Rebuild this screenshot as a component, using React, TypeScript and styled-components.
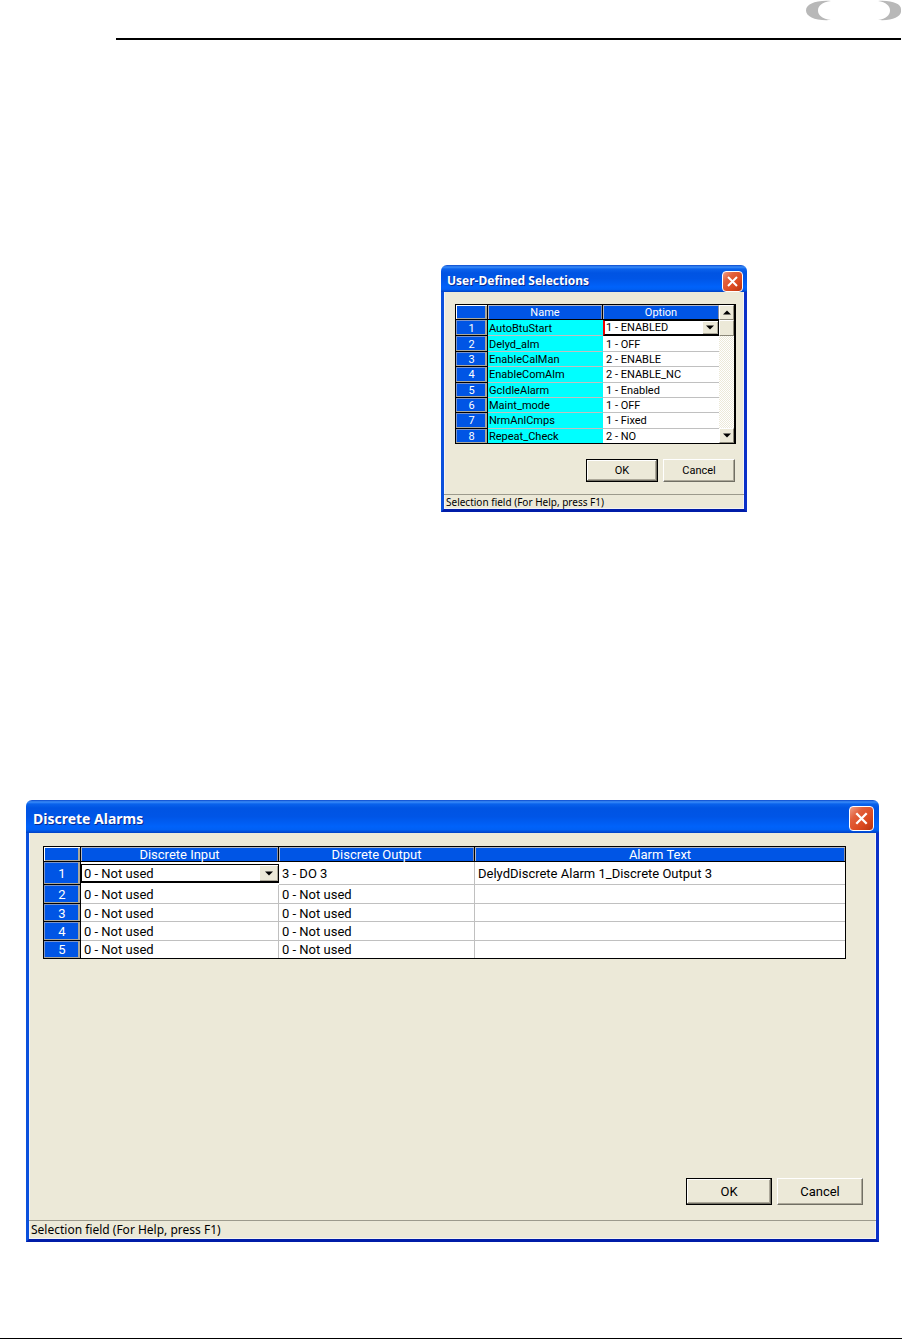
import React, { useId } from 'react';
import styled, { createGlobalStyle, css } from 'styled-components';

const GlobalStyle = createGlobalStyle`
  *, *::before, *::after { box-sizing: border-box; }
  body { margin: 0; background: #fff; color: #000; font-family: Roboto, "Liberation Sans", sans-serif; }
`;

const face = '#ece9d8';
const gridBlue = '#0055e5';
const cyan = '#00ffff';

interface Sized {
  $large?: boolean;
}

const Page = styled.div`
  display: flex;
  flex-direction: column;
`;

const PageHeader = styled.header`
  display: flex;
  justify-content: flex-end;
  height: 40px;
  margin: 0 1px 0 116px;
  border-bottom: 2px solid #000;
`;

const PageFooter = styled.footer`
  margin-top: 96px;
  border-top: 1px solid #000;
`;

const Main = styled.main`
  display: flex;
  flex-direction: column;
  gap: 288px;
  padding: 225px 23px 0 26px;
`;

const Window = styled.section<Sized>`
  display: flex;
  flex-direction: column;
  border-radius: 6px 6px 0 0;
  ${({ $large }) =>
    $large
      ? css`
          min-height: 442px;
        `
      : css`
          width: 306px;
          min-height: 247px;
          margin-left: auto;
          margin-right: 132px;
        `}
`;

const TitleBar = styled.div<Sized>`
  display: flex;
  align-items: center;
  justify-content: space-between;
  height: ${({ $large }) => ($large ? 33 : 27)}px;
  padding: ${({ $large }) => ($large ? '4px 5px 0 7px' : '5px 4px 0 6px')};
  border-radius: 6px 6px 0 0;
  background: linear-gradient(
    #0a48cc 0,
    #3a8cf8 2px,
    #0a62ec 4px,
    #0054e3 8px,
    #0055e6 50%,
    #0062fa 80%,
    #0060f4 90%,
    #0040c4 100%
  );
`;

const Title = styled.h2<Sized>`
  margin: 0;
  color: #fff;
  font: bold ${({ $large }) => ($large ? 14 : 12)}px/20px "Noto Sans", sans-serif;
  text-shadow: 1px 1px 0 #0a2a90;
  white-space: nowrap;
`;

const CloseButton = styled.button<Sized>`
  display: flex;
  align-items: center;
  justify-content: center;
  width: ${({ $large }) => ($large ? 25 : 21)}px;
  height: ${({ $large }) => ($large ? 25 : 21)}px;
  padding: 0;
  border: 1px solid #fff;
  border-radius: 4px;
  background: linear-gradient(135deg, #f0a088 0, #e2603c 30%, #dc4a20 65%, #b83410 100%);
`;

const Body = styled.div`
  flex: 1;
  display: flex;
  flex-direction: column;
  background: ${face};
  border: 3px solid #0a50dc;
  border-top: 0;
  border-right-color: #0a30c8;
  border-bottom-color: #001ca8;
  box-shadow: inset 1px 0 0 #f4f4f4, inset -1px -1px 0 #f4f4f4;
`;

const Content = styled.div<Sized>`
  flex: 1;
  display: flex;
  flex-direction: column;
  padding: ${({ $large }) => ($large ? '13px 13px 15px 14px' : '12px 8px 12px 11px')};
`;

const GridFrame = styled.div<Sized>`
  display: flex;
  border: 1px solid #000;
  background: #fff;
  margin-right: ${({ $large }) => ($large ? 17 : 0)}px;
`;

const Grid = styled.table<Sized>`
  flex: 1;
  min-width: 0;
  table-layout: fixed;
  border-collapse: separate;
  border-spacing: 0;
  height: ${({ $large }) => ($large ? 111 : 138)}px;
  font-size: ${({ $large }) => ($large ? 13 : 11)}px;
  line-height: ${({ $large }) => ($large ? 17 : 14)}px;
`;

const Col = styled.col<{ $width?: number }>`
  width: ${({ $width }) => ($width ? `${$width}px` : 'auto')};
`;

const HeadCell = styled.th`
  padding: 2px 0 0;
  line-height: 12px;
  background: ${gridBlue};
  color: #fff;
  font-weight: normal;
  text-align: center;
  border-right: 1px solid #000;
  border-bottom: 1px solid #000;
  box-shadow: inset 1px 1px 0 #b4b8c4, inset -1px 0 0 #8c90a0;
  &:last-child { border-right: 0; }
`;

const CornerCell = styled(HeadCell).attrs({ as: 'td' })`
  box-shadow: inset 1px 1px 0 #fff, inset -2px -1px 0 #aca899;
`;

const NumberCell = styled(HeadCell)`
  box-shadow: inset -2px -1px 0 #aca899, inset 1px 1px 0 #7c94c8;
  tr:last-child > & { border-bottom: 0; }
`;

const Cell = styled.td<{ $fill?: string; $active?: boolean }>`
  padding: 1px 0 0 ${({ $fill }) => ($fill ? 1 : 3)}px;
  line-height: 13px;
  background: ${({ $fill }) => $fill ?? '#fff'};
  border-right: 1px solid ${({ $fill }) => $fill ?? '#c0c0c0'};
  border-bottom: 1px solid #c0c0c0;
  white-space: nowrap;
  ${({ $active }) => $active && css`padding: 0; border: 0;`}
  &:last-child { border-right: 0; }
  tr:last-child > & { border-bottom: 0; }
`;

const Picker = styled.div<Sized & { $marked?: boolean }>`
  display: flex;
  position: relative;
  height: ${({ $large }) => ($large ? 19 : 16)}px;
  border: 1px solid #000;
  border-bottom-width: 2px;
  border-left: ${({ $marked }) => ($marked ? '2px solid #f00000' : '1px solid #000')};
`;

const PickerSelect = styled.select<Sized>`
  appearance: none;
  flex: 1;
  min-width: 0;
  padding: 1px 0 0 ${({ $large }) => ($large ? 2 : 1)}px;
  border: 0;
  border-radius: 0;
  outline: 0;
  background: #fff;
  color: #000;
  font: inherit;
  line-height: ${({ $large }) => ($large ? 15 : 12)}px;
`;

const PickerArrow = styled.span<Sized>`
  position: absolute;
  top: 0;
  right: 0;
  bottom: 0;
  width: ${({ $large }) => ($large ? 19 : 16)}px;
  display: flex;
  align-items: center;
  justify-content: center;
  background: ${face};
  box-shadow: inset 1px 1px 0 #fff, inset -1px -1px 0 #aca899;
  pointer-events: none;
`;

const ScrollBar = styled.div`
  display: flex;
  flex-direction: column;
  width: 16px;
  border-right: 1px solid #000;
  background: repeating-conic-gradient(#fff 0 25%, ${face} 0 50%) 0 0 / 2px 2px;
`;

const raised = css`
  background: ${face};
  border: 1px solid;
  border-color: #fff #8a8778 #8a8778 #fff;
`;

const ScrollButton = styled.button`
  display: flex;
  align-items: center;
  justify-content: center;
  height: 15px;
  padding: 0;
  ${raised}
`;

const ScrollThumb = styled.div`
  height: 16px;
  margin-bottom: auto;
  ${raised}
`;

const Actions = styled.div<Sized>`
  display: flex;
  justify-content: flex-end;
  gap: 5px;
  margin-top: auto;
  padding-right: ${({ $large }) => ($large ? 0 : 1)}px;
`;

const PushButton = styled.button<Sized & { $primary?: boolean }>`
  width: ${({ $large }) => ($large ? 86 : 72)}px;
  height: ${({ $large }) => ($large ? 27 : 23)}px;
  padding: 0;
  color: #000;
  background: ${face};
  font: ${({ $large }) => ($large ? 13 : 11)}px/16px Roboto, "Liberation Sans", sans-serif;
  border: 1px solid;
  border-color: #fff #716f64 #716f64 #fff;
  box-shadow: inset -1px -1px 0 #aca899;
  ${({ $primary }) =>
    $primary &&
    css`
      border-color: #000;
      box-shadow: inset -1px -1px 0 #716f64, inset 1px 1px 0 #fff, inset -2px -2px 0 #aca899;
    `}
`;

const StatusBar = styled.div<Sized>`
  height: ${({ $large }) => ($large ? 19 : 15)}px;
  padding-left: 2px;
  border-top: 1px solid #9c9a8c;
  font: ${({ $large }) => ($large ? 12 : 10)}px/${({ $large }) => ($large ? 17 : 14)}px "Noto Sans", sans-serif;
  white-space: nowrap;
`;

function Triangle({ up }: { up?: boolean }) {
  return (
    <svg width="8" height="5" viewBox="0 0 8 5" aria-hidden="true">
      <path d={up ? 'M0 4.5 L4 0.5 L8 4.5 Z' : 'M0 0.5 L4 4.5 L8 0.5 Z'} fill="#000" />
    </svg>
  );
}

interface DialogProps {
  title: string;
  large?: boolean;
  children: React.ReactNode;
}

function Dialog({ title, large, children }: DialogProps) {
  const id = useId();
  const mark = large ? 15 : 13;
  return (
    <Window $large={large} role="dialog" aria-labelledby={id}>
      <TitleBar $large={large}>
        <Title $large={large} id={id}>{title}</Title>
        <CloseButton $large={large} type="button" aria-label="Close">
          <svg width={mark} height={mark} viewBox="0 0 13 13" aria-hidden="true">
            <path d="M2 2 L11 11 M11 2 L2 11" stroke="#fff" strokeWidth="2" />
          </svg>
        </CloseButton>
      </TitleBar>
      <Body>
        <Content $large={large}>
          {children}
          <Actions $large={large}>
            <PushButton $large={large} $primary type="button">OK</PushButton>
            <PushButton $large={large} type="button">Cancel</PushButton>
          </Actions>
        </Content>
        <StatusBar $large={large}>Selection field (For Help, press F1)</StatusBar>
      </Body>
    </Window>
  );
}

interface OptionPickerProps {
  label: string;
  value: string;
  large?: boolean;
  marked?: boolean;
}

function OptionPicker({ label, value, large, marked }: OptionPickerProps) {
  return (
    <Picker $large={large} $marked={marked}>
      <PickerSelect $large={large} aria-label={label} defaultValue={value}>
        <option>{value}</option>
      </PickerSelect>
      <PickerArrow $large={large}><Triangle /></PickerArrow>
    </Picker>
  );
}

const selections = [
  ['AutoBtuStart', '1 - ENABLED'],
  ['Delyd_alm', '1 - OFF'],
  ['EnableCalMan', '2 - ENABLE'],
  ['EnableComAlm', '2 - ENABLE_NC'],
  ['GcIdleAlarm', '1 - Enabled'],
  ['Maint_mode', '1 - OFF'],
  ['NrmAnlCmps', '1 - Fixed'],
  ['Repeat_Check', '2 - NO'],
];

const alarms = [
  ['0 - Not used', '3 - DO 3', 'DelydDiscrete Alarm 1_Discrete Output 3'],
  ['0 - Not used', '0 - Not used', ''],
  ['0 - Not used', '0 - Not used', ''],
  ['0 - Not used', '0 - Not used', ''],
  ['0 - Not used', '0 - Not used', ''],
];

function SelectionsDialog() {
  return (
    <Dialog title="User-Defined Selections">
      <GridFrame>
        <Grid>
          <colgroup><Col $width={32} /><Col $width={115} /><Col /></colgroup>
          <thead>
            <tr>
              <CornerCell />
              <HeadCell scope="col">Name</HeadCell>
              <HeadCell scope="col">Option</HeadCell>
            </tr>
          </thead>
          <tbody>
            {selections.map(([name, option], i) => (
              <tr key={name}>
                <NumberCell scope="row">{i + 1}</NumberCell>
                <Cell $fill={cyan}>{name}</Cell>
                <Cell $active={i === 0}>
                  {i === 0 ? <OptionPicker label={name} value={option} marked /> : option}
                </Cell>
              </tr>
            ))}
          </tbody>
        </Grid>
        <ScrollBar>
          <ScrollButton type="button" aria-label="Scroll up"><Triangle up /></ScrollButton>
          <ScrollThumb />
          <ScrollButton type="button" aria-label="Scroll down"><Triangle /></ScrollButton>
        </ScrollBar>
      </GridFrame>
    </Dialog>
  );
}

function AlarmsDialog() {
  return (
    <Dialog title="Discrete Alarms" large>
      <GridFrame $large>
        <Grid $large>
          <colgroup><Col $width={37} /><Col $width={198} /><Col $width={196} /><Col /></colgroup>
          <thead>
            <tr>
              <CornerCell />
              <HeadCell scope="col">Discrete Input</HeadCell>
              <HeadCell scope="col">Discrete Output</HeadCell>
              <HeadCell scope="col">Alarm Text</HeadCell>
            </tr>
          </thead>
          <tbody>
            {alarms.map(([input, output, text], i) => (
              <tr key={i}>
                <NumberCell scope="row">{i + 1}</NumberCell>
                <Cell $active={i === 0}>
                  {i === 0 ? <OptionPicker label="Discrete input 1" value={input} large /> : input}
                </Cell>
                <Cell>{output}</Cell>
                <Cell>{text}</Cell>
              </tr>
            ))}
          </tbody>
        </Grid>
      </GridFrame>
    </Dialog>
  );
}

export default function App() {
  return (
    <Page>
      <GlobalStyle />
      <PageHeader>
        <svg width="95" height="21" viewBox="0 0 95 21" aria-hidden="true">
          <path d="M25 1 C10 0 0 4 0 10.5 C0 17 10 21 25 20 C16 19 12 15 12 10.5 C12 6 16 2 25 1 Z" fill="#b8b8b8" />
          <path d="M72 1 C86 0 95 4 95 9 V12 C94 17 86 21 72 20 C80 19 84 15 84 10.5 C84 6 80 2 72 1 Z" fill="#b8b8b8" />
        </svg>
      </PageHeader>
      <Main>
        <SelectionsDialog />
        <AlarmsDialog />
      </Main>
      <PageFooter />
    </Page>
  );
}
